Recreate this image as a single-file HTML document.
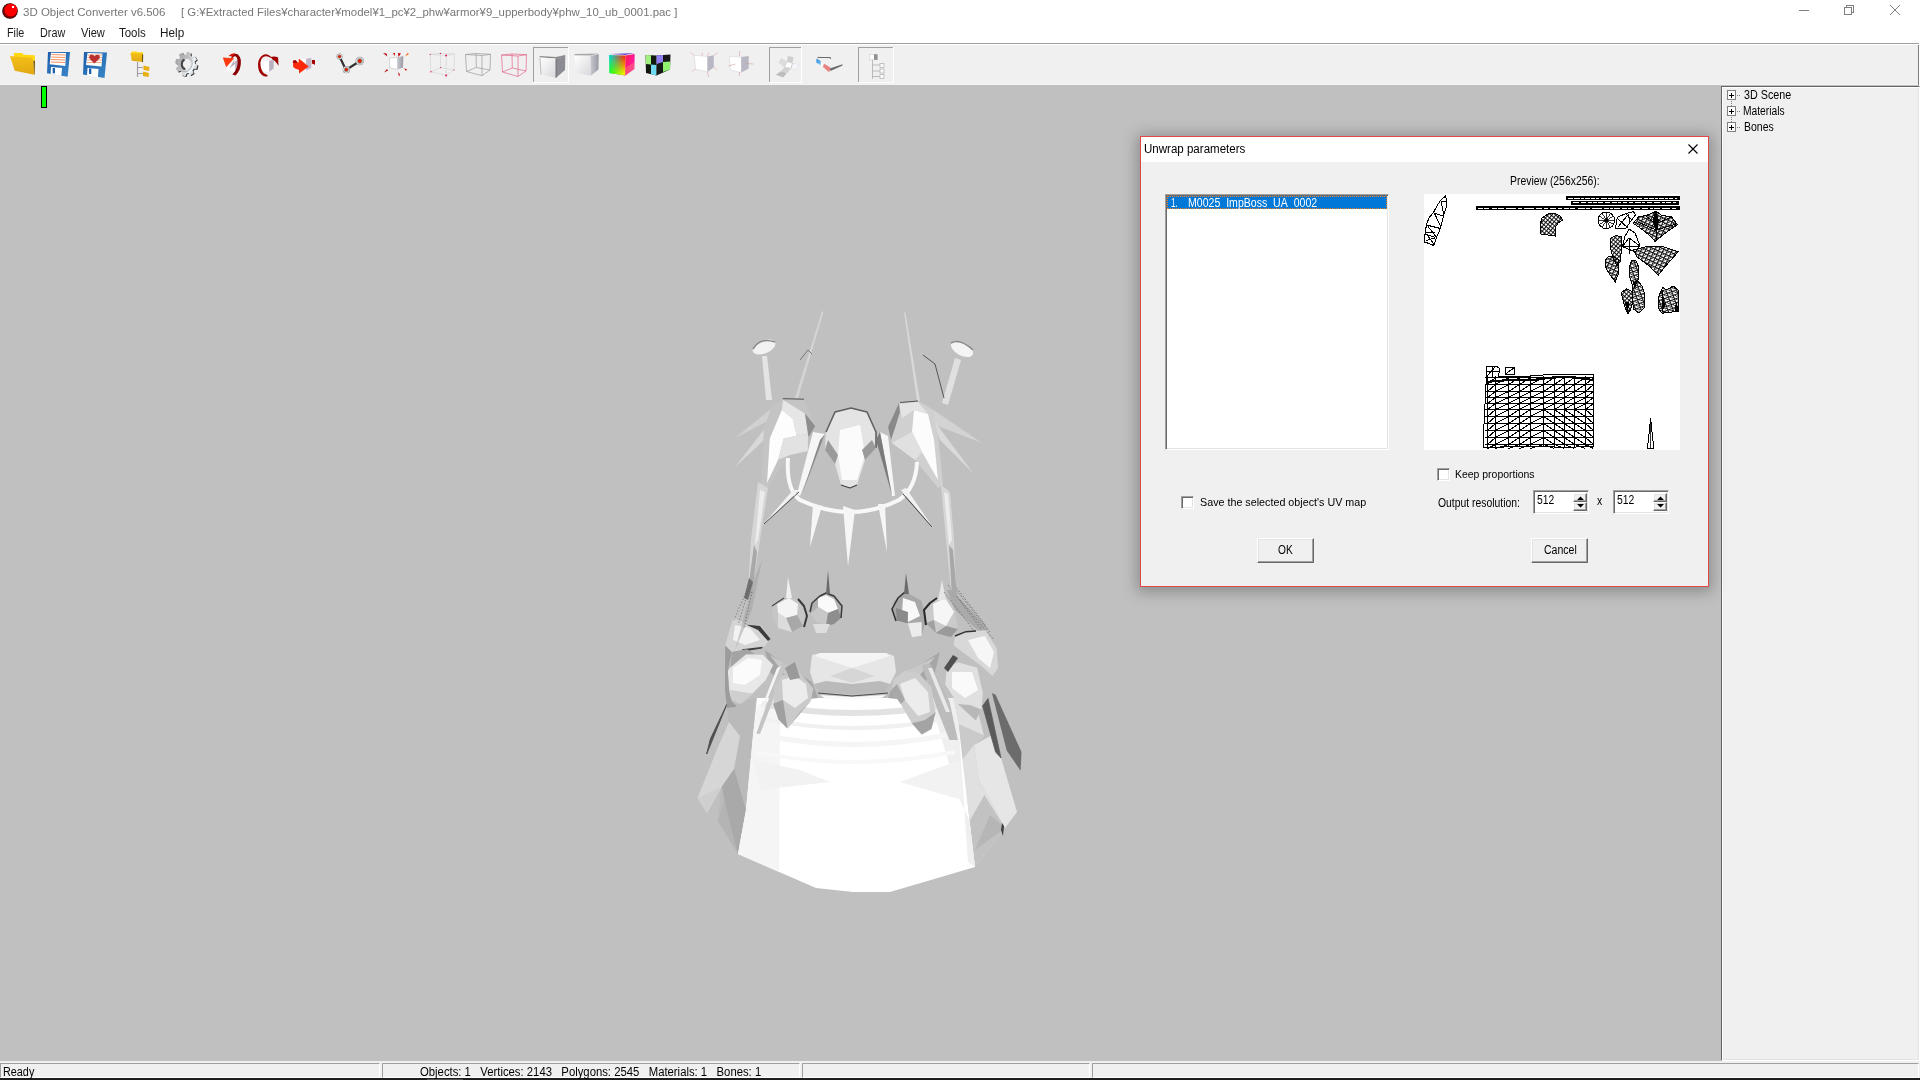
<!DOCTYPE html>
<html><head><meta charset="utf-8">
<style>
*{margin:0;padding:0;box-sizing:border-box}
html,body{width:1920px;height:1080px;overflow:hidden;background:#c0c0c0;font-family:"Liberation Sans",sans-serif;position:relative}
.abs{position:absolute}
#title{left:0;top:0;width:1920px;height:23px;background:#fff}
#menu{left:0;top:23px;width:1920px;height:20px;background:#fff}
#tbline{left:0;top:43px;width:1919px;height:1px;background:#a0a0a0}
#rw{left:1919px;top:43px;width:1px;height:1037px;background:#fff}
#tbline2{left:0;top:44px;width:1919px;height:1px;background:#fff}
#toolbar{left:0;top:45px;width:1919px;height:40px;background:#f0f0f0;border-right:1px solid #808080;box-shadow:inset 0 -1px 0 #f4f4f4}
.t{position:absolute;white-space:pre;line-height:1;transform-origin:0 0}
#panel{left:1721px;top:86px;width:199px;height:975px;background:#f0f0f0;border-left:1px solid #646464;border-top:1px solid #646464;border-right:1px solid #fff;border-bottom:1px solid #fff;box-shadow:inset 1px 1px 0 #fff, inset -1px -1px 0 #e3e3e3}
#status{left:0;top:1061px;width:1920px;height:19px;background:#f0f0f0}
.sp{position:absolute;top:2px;height:15px;border-top:1px solid #a0a0a0;border-left:1px solid #a0a0a0;border-bottom:1px solid #fff;border-right:1px solid #fff}
#dlg{left:1140px;top:136px;width:569px;height:451px;border:1px solid #e04848;background:#f0f0f0;box-shadow:0 2px 14px 3px rgba(0,0,0,0.28)}
#dlgcap{left:0;top:0;width:567px;height:25px;background:#fff}
.ms{font-size:11px;color:#000}
.chk{position:absolute;width:13px;height:13px;background:#fff;border-top:1px solid #a0a0a0;border-left:1px solid #a0a0a0;border-right:1px solid #fff;border-bottom:1px solid #fff;box-shadow:inset 1px 1px 0 #696969, inset -1px -1px 0 #e3e3e3}
.btn{position:absolute;background:#f0f0f0;border-top:1px solid #fff;border-left:1px solid #fff;border-right:1px solid #696969;border-bottom:1px solid #696969;box-shadow:inset -1px -1px 0 #a0a0a0, inset 1px 1px 0 #e3e3e3}
.edit{position:absolute;background:#fff;border-top:1px solid #a0a0a0;border-left:1px solid #a0a0a0;border-right:1px solid #fff;border-bottom:1px solid #fff;box-shadow:inset 1px 1px 0 #696969, inset -1px -1px 0 #e3e3e3}
</style></head><body>
<div id="title" class="abs">
 <svg class="abs" style="left:2px;top:3px" width="16" height="16"><circle cx="8" cy="8" r="7.8" fill="#1a0000"/><circle cx="8" cy="8" r="7.2" fill="#8a0000"/><circle cx="9" cy="7" r="6.3" fill="#ff0000"/><rect x="10" y="3" width="2" height="2" fill="#fff"/></svg>
</div>
<div id="menu" class="abs">
</div>
<div id="tbline" class="abs"></div><div id="rw" class="abs"></div><div id="tbline2" class="abs"></div>
<div id="toolbar" class="abs"></div>
<div class="abs" style="left:41px;top:86px;width:6px;height:22px;background:#00ff00;border:1px solid #000"></div>
<div id="panel" class="abs"></div>
<svg class="abs" style="left:1726px;top:90px" width="20" height="48">
<g fill="none" shape-rendering="crispEdges">
<rect x="1.5" y="0.5" width="8" height="9" stroke="#808080" fill="#fff"/>
<rect x="1.5" y="16.5" width="8" height="9" stroke="#808080" fill="#fff"/>
<rect x="1.5" y="32.5" width="8" height="9" stroke="#808080" fill="#fff"/>
<path d="M3 5.5H8M5.5 3V8 M3 21.5H8M5.5 19V24 M3 37.5H8M5.5 35V40" stroke="#000"/>
</g>
<g fill="#808080">
<rect x="11" y="5" width="1" height="1"/><rect x="13" y="5" width="1" height="1"/>
<rect x="11" y="21" width="1" height="1"/><rect x="13" y="21" width="1" height="1"/>
<rect x="11" y="37" width="1" height="1"/><rect x="13" y="37" width="1" height="1"/>
<rect x="5" y="11" width="1" height="1"/><rect x="5" y="13" width="1" height="1"/><rect x="5" y="15" width="1" height="1"/>
<rect x="5" y="27" width="1" height="1"/><rect x="5" y="29" width="1" height="1"/><rect x="5" y="31" width="1" height="1"/>
</g>
</svg>
<svg class="abs" style="left:1790px;top:0" width="130" height="24">
<g stroke="#808080" stroke-width="1" fill="none" shape-rendering="crispEdges">
<path d="M9 10.5H19"/>
<rect x="54.5" y="7.5" width="7" height="7"/>
<path d="M56.5 7.5V5.5H63.5V12.5H61.5"/>
</g>
<path d="M100 5L110 15M110 5L100 15" stroke="#808080" stroke-width="1" fill="none"/>
</svg>

<div id="status" class="abs">
 <div class="sp" style="left:0;width:380px"></div>
 <div class="sp" style="left:382px;width:418px"></div>
 <div class="sp" style="left:802px;width:288px"></div>
 <div class="sp" style="left:1092px;width:827px"></div>
</div>
<div class="abs" style="left:0;top:1078px;width:1920px;height:2px;background:#1e1e1e"></div>
<div class="abs" style="left:427px;top:1079px;width:36px;height:1px;background:#505050"></div>
<div id="dlg" class="abs">
 <div id="dlgcap" class="abs"></div>
</div>
<svg class="abs" style="left:0;top:45px" width="920" height="40" viewBox="0 45 920 40">
<defs>
<linearGradient id="gFold" x1="0" y1="0" x2="0" y2="1"><stop offset="0" stop-color="#f4c018"/><stop offset="1" stop-color="#e0a810"/></linearGradient>
<linearGradient id="gBlue" x1="0" y1="0" x2="1" y2="1"><stop offset="0" stop-color="#1c5ea8"/><stop offset="1" stop-color="#3a86c8"/></linearGradient>
<linearGradient id="gGear" x1="0" y1="0" x2="1" y2="1"><stop offset="0" stop-color="#808080"/><stop offset="0.5" stop-color="#e8e8e8"/><stop offset="1" stop-color="#909090"/></linearGradient>
<linearGradient id="gSide" x1="0" y1="0" x2="1" y2="0"><stop offset="0" stop-color="#c8c8d0"/><stop offset="1" stop-color="#9a9aa4"/></linearGradient>
<linearGradient id="gFace" x1="0" y1="0" x2="1" y2="1"><stop offset="0" stop-color="#ffffff"/><stop offset="1" stop-color="#d8d8dc"/></linearGradient>
<linearGradient id="gRGB1" x1="0" y1="0" x2="1" y2="1"><stop offset="0" stop-color="#10d8c0"/><stop offset="0.5" stop-color="#d86010"/><stop offset="0.75" stop-color="#40e010"/><stop offset="1" stop-color="#f0e000"/></linearGradient>
<linearGradient id="gRGB2" x1="0" y1="0" x2="1" y2="1"><stop offset="0" stop-color="#ff1040"/><stop offset="1" stop-color="#ff00e0"/></linearGradient>
<radialGradient id="gJoint"><stop offset="0.35" stop-color="#e02000"/><stop offset="0.5" stop-color="#909090"/><stop offset="0.8" stop-color="#e0e0e0"/><stop offset="1" stop-color="#808080"/></radialGradient>
</defs>
<!-- pressed buttons -->
<g shape-rendering="crispEdges">
<path d="M533.5 82V47.5H568" stroke="#a0a0a0" fill="none"/><path d="M568.5 47V82.5H533" stroke="#fff" fill="none"/>
<path d="M769.5 82V47.5H801" stroke="#a0a0a0" fill="none"/><path d="M801.5 47V82.5H769" stroke="#fff" fill="none"/>
<path d="M858.5 82V47.5H893" stroke="#a0a0a0" fill="none"/><path d="M893.5 47V82.5H858" stroke="#fff" fill="none"/>
</g>
<!-- folder -->
<path d="M14 53H22L23.5 54.7L34.7 55.3L35 61H14Z" fill="#ffd810"/>
<path d="M10 56L31.3 57.7L33.3 60.7L34.3 74.7L14.7 70.7Z" fill="url(#gFold)"/>
<path d="M33.3 60.7L35 60.7L34.7 74.7L34.3 74.7Z" fill="#7a5808"/>
<!-- floppy -->
<path d="M48 52L70 52L67.7 76.7L47 73.3Z" fill="url(#gBlue)"/>
<path d="M51 52.7L66 53L65.3 66L49.7 64.3Z" fill="#fff"/>
<path d="M51.5 54.5L65.5 55M51.3 57L65.3 57.5M51 59.5L65 60M50.8 62L65 62.5" stroke="#f49060" stroke-width="1"/>
<path d="M51 67L62 68L61.3 76L50.7 74Z" fill="#fff"/>
<rect x="52.7" y="68" width="2.3" height="5.3" fill="#1c5ea8"/>
<!-- floppy heart -->
<path d="M84 52L107 52.5L104.5 78L83 74.5Z" fill="url(#gBlue)"/>
<path d="M87.5 53L102.5 53.5L101.5 66.5L86 65Z" fill="#fff"/>
<path d="M88 55H102M87.5 57.5H102M87.3 60H101.8M87 62.5H101.5" stroke="#f4a070" stroke-width="0.9"/>
<path d="M94.3 63.5L89.5 58.5Q88.5 55 91.5 54.5Q93.5 54.5 94.5 56.3Q95.5 54.5 98 54.8Q100.5 55.5 99.5 58.5Z" fill="#b83030"/>
<path d="M87.5 68L98.5 69L98 77.5L87 75.5Z" fill="#fff"/>
<rect x="89" y="68.5" width="2.3" height="5.5" fill="#1c5ea8"/>
<!-- tree folders -->
<path d="M131.5 51.5H136.5L137.3 52.3H143V55H131.5Z" fill="#ffd810"/>
<path d="M130.5 53L143 53.5L143 62L131.8 60.8Z" fill="url(#gFold)"/>
<path d="M142 54.5L143.2 54.5L143 62.3L142 62Z" fill="#6a5008"/>
<path d="M137.5 62V77" stroke="#a0a0a0" stroke-width="1.2"/>
<path d="M137.5 67.5H143M137.5 73.5H143" stroke="#a0a0a0" stroke-width="1"/>
<path d="M143.5 65.5L149.5 67L149 71L143.5 70Z" fill="#e8b010"/>
<path d="M143 71.5L149 73L148.5 77L143 76Z" fill="#e8b010"/>
<!-- gear -->
<defs><linearGradient id="gG2" x1="0" y1="0.2" x2="1" y2="0.8"><stop offset="0" stop-color="#9a9a9a"/><stop offset="0.45" stop-color="#c8c8cc"/><stop offset="0.75" stop-color="#f4fafc"/><stop offset="1" stop-color="#b0b0b0"/></linearGradient></defs>
<path d="M195.95 64.61 L198.50 65.65 L197.50 69.89 L194.80 69.47 L193.54 71.31 L194.66 74.01 L191.21 76.24 L189.57 73.87 L187.47 74.20 L186.51 76.97 L182.62 75.89 L183.00 72.96 L181.31 71.58 L178.83 72.80 L176.78 69.05 L178.95 67.27 L178.65 64.99 L176.10 63.95 L177.10 59.71 L179.80 60.13 L181.06 58.29 L179.94 55.59 L183.39 53.36 L185.03 55.73 L187.13 55.40 L188.09 52.63 L191.98 53.71 L191.60 56.64 L193.29 58.02 L195.77 56.80 L197.82 60.55 L195.65 62.33Z" fill="#3a3a3a"/>
<path d="M194.95 63.81 L197.50 64.85 L196.50 69.09 L193.80 68.67 L192.54 70.51 L193.66 73.21 L190.21 75.44 L188.57 73.07 L186.47 73.40 L185.51 76.17 L181.62 75.09 L182.00 72.16 L180.31 70.78 L177.83 72.00 L175.78 68.25 L177.95 66.47 L177.65 64.19 L175.10 63.15 L176.10 58.91 L178.80 59.33 L180.06 57.49 L178.94 54.79 L182.39 52.56 L184.03 54.93 L186.13 54.60 L187.09 51.83 L190.98 52.91 L190.60 55.84 L192.29 57.22 L194.77 56.00 L196.82 59.75 L194.65 61.53Z" fill="url(#gG2)"/>
<ellipse cx="185.8" cy="64.2" rx="6.2" ry="7.6" transform="rotate(22 185.8 64.2)" fill="none" stroke="#b4b4b8" stroke-width="1"/>
<ellipse cx="186" cy="64.3" rx="3.9" ry="5.4" transform="rotate(22 186 64.3)" fill="#f0f0f0"/>
<path d="M184.5 59.5Q181.5 61 181.8 65Q182.3 68.5 185.3 69.2" fill="none" stroke="#454545" stroke-width="2"/>
<!-- rotate 1 -->
<path d="M226.2 61.7L235.2 61L235.2 72L226.6 70.3Z" fill="#fff"/>
<path d="M235.2 61L239.8 59.8L239.8 70.3L235.2 72Z" fill="#b8b0c0"/>
<path d="M229.3 68.6L234 60.5L235 64Z" fill="#b8aeb8"/>
<path d="M231 57.5Q234 51.8 238 54.5Q241.5 58 240.8 64Q240.2 71 235.5 75.5L232.4 74.6Q236.8 70 237.6 64Q238 58.5 236 56.5Q234 55.5 232.5 58Z" fill="#8c0000"/>
<path d="M228.5 56Q231.5 52.8 235 53.2L233.5 56.5Z" fill="#d01000"/>
<path d="M222.8 57.6L234.2 58.3L226.2 67.2Z" fill="#ff3a10"/>
<!-- rotate 2 -->
<path d="M259.9 60.7L269.2 60.7L269.2 71.7L261 71.4Z" fill="#fff"/>
<path d="M269.2 60.7L273.7 59.7L273.7 68.6L269.2 71.7Z" fill="#b8b0c0"/>
<path d="M272.3 58.3Q268 53 264 54.5Q258.5 57 258 64Q258 72 262 75Q265 77.5 268 76L266.5 74.5Q262.5 73.5 261 68Q259.5 62 262 58Q265 55 270 57.5Z" fill="#a00000"/>
<path d="M270.5 57Q275 56 278.1 57.6L278.5 66Q276 61 272.5 59.5Z" fill="#a00000"/>
<!-- arrow -->
<path d="M297.9 58L306.1 58.8L306.1 70.5L299 69Z" fill="#fff"/>
<path d="M306.1 58.8L311.3 58L311.3 68.1L306.1 70.5Z" fill="#c0b8c8"/>
<path d="M311.9 59.9L315 60.1L315 64.8L311.9 63.5Z" fill="#a00000"/>
<path d="M292.9 60.9Q294.5 60 295.8 60.4L298.4 63L298.9 58.6L308.7 66.6L299.1 73.6L298.9 69.7Q295 69 293.2 66.9Z" fill="#ff2a0a"/>
<path d="M292.9 60.9Q294.5 60 295.8 60.4L297.5 62.5L293.5 63Z" fill="#900000"/>
<!-- bones -->
<path d="M339.5 56.5L346 70L360 61" fill="none" stroke="#303030" stroke-width="2.2"/>
<circle cx="339.5" cy="56.5" r="3" fill="url(#gJoint)"/>
<circle cx="346.3" cy="69.7" r="3.6" fill="url(#gJoint)"/>
<circle cx="359.8" cy="61" r="4.2" fill="url(#gJoint)"/>
<!-- explode -->
<path d="M389.5 58L397.5 57.5L397.5 69.5L389.5 68Z" fill="#fff" stroke="#c0c0c0" stroke-width="0.6"/>
<path d="M397.5 57.5L403.3 56L403 67.5L397.5 69.5Z" fill="url(#gSide)"/>
<g fill="#c00000">
<path d="M383 53L386.5 53.5L387.3 56.5Z"/><path d="M393 53L395 53L394.5 56Z"/><path d="M398 53L401 53.5L398.5 57Z"/>
<path d="M407.5 53L409 54L405 56.5Z" fill="#ff6010"/><path d="M384 72.5L387 69L388 70.5Z"/><path d="M398 72L400 74.5L399 76.5Z"/><path d="M404 68L407.5 70L405.5 70.5Z"/>
</g>
<!-- wire cube vertices -->
<g fill="none" stroke="#d8d8d8" stroke-width="0.8">
<path d="M430.2 54.4L440.4 53.4L454.6 54.1L446.1 55.4Z M430.2 54.4L430.9 71.7L446.1 75.4L453.9 70L454.6 54.1 M446.1 55.4L446.1 75.4 M440.4 53.4L440.7 67.6L430.9 71.7 M440.7 67.6L453.9 70"/>
</g>
<g fill="#e0206a"><circle cx="446.1" cy="55.4" r="1"/><circle cx="446.1" cy="75.4" r="1"/><circle cx="440.4" cy="53.4" r="0.7"/><circle cx="440.7" cy="67.6" r="0.7"/><circle cx="430.9" cy="71.7" r="0.7"/><circle cx="430.2" cy="54.4" r="0.6"/><circle cx="453.9" cy="70" r="0.6"/></g>
<!-- wire cube -->
<path d="M465.5 54.5L476 53.5L490.5 54.3L482 55.5Z M465.5 54.5L466.5 71.5L482 75.7L490 70L490.5 54.3 M482 55.5L482 75.7 M476 53.5L476.3 67.5L466.5 71.5 M476.3 67.5L490 70" fill="none" stroke="#9a9a9a" stroke-width="0.7"/>
<!-- red wire cube -->
<path d="M501.5 55L512 54L526.5 54.7L518 56Z M501.5 55L502.5 72L518 76.5L526 71L526.5 54.7 M518 56L518 76.5 M512 54L512.3 68L502.5 72 M512.3 68L526 71" fill="none" stroke="#e05a80" stroke-width="0.65"/>
<!-- solid cube (pressed) -->
<path d="M539.5 56L556 57L565 55L565.5 56.5L556 58.5L540 57.5Z" fill="#8a8a8a"/>
<path d="M540 57.5L556 58.5L556 77.8L540.5 74.5Z" fill="url(#gFace)"/>
<path d="M540 57.5L541 74.5" stroke="#b0b0b0" stroke-width="0.8"/>
<path d="M556 58.5L565.3 56.3L565 70L556 77.8Z" fill="#8c8c94"/>
<path d="M556 58.5L556 77.8" stroke="#606060" stroke-width="0.8"/>
<!-- shaded cube -->
<path d="M574.5 54L598.5 53.5L590.5 55.5L574.5 55.5Z" fill="#a8a8a8"/>
<path d="M574.5 55.5L590.5 56L591 75.5L575 73Z" fill="url(#gFace)"/>
<path d="M590.5 56L598.7 54L598.5 69.5L591 75.5Z" fill="url(#gSide)"/>
<!-- color cube -->
<defs>
<linearGradient id="gH1" x1="0" y1="0" x2="1" y2="0"><stop offset="0" stop-color="#00e0d0"/><stop offset="1" stop-color="#ff2a00"/></linearGradient>
<linearGradient id="gH2" x1="0" y1="0" x2="1" y2="0"><stop offset="0" stop-color="#10ff10"/><stop offset="1" stop-color="#ffee00"/></linearGradient>
<linearGradient id="gV" x1="0" y1="0" x2="0" y2="1"><stop offset="0.1" stop-color="#fff" stop-opacity="0"/><stop offset="0.9" stop-color="#fff" stop-opacity="1"/></linearGradient>
<linearGradient id="gS1" x1="0" y1="0" x2="1" y2="1"><stop offset="0" stop-color="#ff2040"/><stop offset="1" stop-color="#ff10e0"/></linearGradient>
<mask id="mV" maskContentUnits="objectBoundingBox"><rect x="0" y="0" width="1" height="1" fill="url(#gV)"/></mask>
</defs>
<path d="M609.5 54L634.5 53L625.3 55Z" fill="#7050d0"/>
<path d="M609 55L625.3 55.5L625.3 75.5L609.5 73Z" fill="url(#gH1)"/>
<path d="M609 55L625.3 55.5L625.3 75.5L609.5 73Z" fill="url(#gH2)" mask="url(#mV)"/>
<path d="M625.3 55.5L634.7 54L634.3 69L625.3 75.5Z" fill="url(#gS1)"/>
<path d="M625.3 68L634.3 62L634.3 69L625.3 75.5Z" fill="#ff8060" opacity="0.5"/>
<!-- checker cube -->
<path d="M645.5 55L656.5 55.5L656.5 75.5L646 73Z" fill="#101810"/>
<path d="M645.5 55L651 55.2L651 64.5L645.8 64Z" fill="#a0f080"/>
<path d="M651 64.5L656.5 65L656.5 75.5L651 74.5Z" fill="#70d8f0"/>
<path d="M656.5 55.5L670.5 54.5L670 69.5L656.5 75.5Z" fill="#181818"/>
<path d="M656.5 55.5L663 55L663 62L656.5 64Z" fill="#9080f0"/>
<path d="M663 62L670.2 61.5L670 69.5L663 72Z" fill="#90f070"/>
<!-- normals cube -->
<path d="M694.3 55.3L707.5 56.5L707.5 71.9L695.5 69Z" fill="#fff" stroke="#d0d0d0" stroke-width="0.5"/>
<path d="M707.5 56.5L713.8 55.3L713.8 67.3L707.5 71.9Z" fill="#b8b8c4"/>
<path d="M694.3 55.3L690.5 52.5M707.5 56.5L708.5 52.5M713.8 55.3L718 52.5M713.8 67.3L717 70M707.5 71.9L708.5 77M695.5 69L692 71.5M702 55.5L702.5 52.5" stroke="#d8a0a0" stroke-width="0.55"/>
<!-- axis cube -->
<path d="M729.3 56.5L741.3 57L741.3 72.5L730.4 70.2Z" fill="#fff" stroke="#d0d0d0" stroke-width="0.5"/>
<path d="M741.3 57L748.7 55.9L748.7 68.5L741.3 72.5Z" fill="#b8b8c4"/>
<path d="M739.5 51V56M728.5 66L735.5 64M745.5 63.5L753.5 64M739.5 72V76" stroke="#d0a0a0" stroke-width="0.6"/>
<!-- unwrap -->
<path d="M787.9 55.9L793.75 57.2L792.5 62.6L787 61.3Z" fill="#cfcfd2"/>
<path d="M781.25 58L786.25 61.3L784.2 67.2L778.3 62.6Z" fill="#dcdcde"/>
<path d="M792.9 63.4L798.75 64.25L796.7 70L790.8 68.8Z" fill="#f6f6fa" stroke="#d8d8d8" stroke-width="0.4"/>
<path d="M784.6 67.2L790.4 68.8L787.5 73L780.8 71.3Z" fill="#d2d2d4"/>
<path d="M780.8 71.3L786.7 73L783.3 77.6L775.8 74.7Z" fill="#bdbdc0"/>
<path d="M786.7 61.75L792.5 63L790.8 68.4L784.6 67.2Z" fill="#fff" stroke="#b8b8b8" stroke-width="0.6"/>
<!-- glasses -->
<path d="M817.5 57.4L830.4 57.6L830.4 59" fill="none" stroke="#686868" stroke-width="1"/>
<defs><linearGradient id="gBl" x1="0" y1="0" x2="1" y2="1"><stop offset="0" stop-color="#1078d8"/><stop offset="1" stop-color="#b0dcf4"/></linearGradient></defs>
<path d="M816.7 58.4L821.25 61.3L820.8 65.5L816.25 62.6Z" fill="url(#gBl)"/>
<path d="M823.75 63.4L830.4 67.6L829.2 72.6L822.9 66.75Z" fill="#e88282"/>
<path d="M829.8 68.5L842.5 64.2L842.5 65.4L830.5 71Z" fill="#6a6a6a"/>
<path d="M821.25 61.3L823.75 63.4L822.9 66.75L820.8 65.5Z" fill="#fafafa"/>
<!-- hierarchy -->
<rect x="869.3" y="54.3" width="5" height="5.6" fill="#fcfcfc" stroke="#c8c8c8" stroke-width="0.5"/>
<rect x="874" y="54.2" width="3.6" height="5.7" fill="#909090"/>
<path d="M872.5 60V79M872.5 65H880M872.5 71H880M872.5 76.5H880" stroke="#b4b4b4" stroke-width="0.9"/>
<rect x="880" y="63.5" width="4" height="4" fill="#fafafa" stroke="#b0b0b0" stroke-width="0.7"/>
<rect x="880" y="69" width="4" height="4" fill="#fafafa" stroke="#b0b0b0" stroke-width="0.7"/>
<rect x="880" y="74.5" width="4" height="4" fill="#fafafa" stroke="#b0b0b0" stroke-width="0.7"/>
</svg>
<svg class="abs" style="left:0;top:0" width="1720" height="1060" viewBox="0 0 1720 1060">
<g stroke-linejoin="round">
<!-- left flap -->
<polygon points="727,708 755,698 753,736 746,810 738,854 718,821 721.5,784 734,769" fill="#bababa"/>
<polygon points="721.5,784 734,769 746,810 738,854 730,830" fill="#a9a9a9"/>
<polygon points="718,821 724,800 738,854" fill="#b4b4b4"/>
<polygon points="729,722 740,736 734,769 721.5,787 707,813 697.5,798 718,747" fill="#d6d6d6"/>
<polygon points="697.5,798 721.5,787 707,813" fill="#cfcfcf"/>
<polygon points="727,704 706.7,754 710.4,739" fill="#505050" stroke="#505050" stroke-width="1"/>
<!-- right flap -->
<polygon points="953,698 975,700 984,736 974,745 979,780 1005,828 975,867 969.6,821 958.5,724" fill="#e0e0e0"/>
<polygon points="974,745 994,734 1017,812 1005,828 979,780" fill="#e6e6e6"/>
<polygon points="969.6,821 984.4,795 1005,828 975,867" fill="#c2c2c2"/>
<polygon points="975,850 990,815 1005,828" fill="#b6b6b6"/>
<polygon points="958.5,724 984.4,735.5 974,745 962,760" fill="#cacaca"/>
<polygon points="982.6,706 988,698.5 1001,758 995.6,752" fill="#5a5a5a" stroke="#5a5a5a" stroke-width="0.8"/>
<polygon points="991.9,693 995.6,694.8 1021.5,752 1020.6,770.7 1006.7,750.4" fill="#6c6c6c"/>
<polygon points="1002,823 1004,826 1003,836 1001,830" fill="#404040"/>
<!-- skirt main -->
<polygon points="757,698 953,698 958.5,724 969.6,821 975,867 890,892 853,892 816,888 738,854 746,810 753,736" fill="#ffffff"/>
<polygon points="753,736 757,705 780,700 779,872 738,854 746,810" fill="#f5f5f5"/>
<polygon points="958.5,724 953,698 930,700 960,800 969.6,821 975,867 968,862" fill="#efefef"/>
<path d="M762,704 Q853,722 948,704" fill="none" stroke="#e2e2e2" stroke-width="6"/>
<path d="M760,718 Q853,738 950,718" fill="none" stroke="#f0f0f0" stroke-width="4"/>
<path d="M758,734 Q853,755 952,734" fill="none" stroke="#f5f5f5" stroke-width="5"/>
<path d="M756,752 Q853,772 955,752" fill="none" stroke="#f8f8f8" stroke-width="4"/>
<polygon points="753,760 800,770 830,782 760,790" fill="#f2f2f2"/>
<polygon points="900,782 960,760 962,800" fill="#f2f2f2"/>
<!-- ribbons under pendants -->
<polygon points="765,650 790,668 812,682 818,698 800,700 770,672" fill="#a6a6a6"/>
<polygon points="940,652 915,668 894,682 888,698 906,700 935,672" fill="#a6a6a6"/>
<polygon points="770,655 800,672 812,690 805,690 785,675" fill="#c8c8c8"/>
<polygon points="935,657 905,672 894,690 900,690 920,675" fill="#c8c8c8"/>
<!-- belt -->
<polygon points="812,655 820,653 886,653 894,656 896,672 890,684 880,688 852,690 826,688 814,684 810,672" fill="#e6e6e6"/>
<polygon points="815,656 852,668 890,656 886,653 820,653" fill="#f4f4f4"/>
<polygon points="830,676 852,668 875,676 852,683" fill="#d6d6d6"/>
<polygon points="814,684 826,681 852,684 880,681 890,684 885,692 852,694 820,692" fill="#bababa"/>
<polyline points="818,693 852,696 888,693" fill="none" stroke="#4a4a4a" stroke-width="1"/>
<polygon points="820,695 852,697 886,695 880,699 852,700 826,699" fill="#fafafa"/>
<!-- left clusters -->
<polygon points="733,618 747,624 761.5,626 770.6,639 764,646.7 747,649.3 731.7,652 725.2,645.4" fill="#d4d4d4"/>
<polygon points="735,625 750,628 760,640 745,645 733,640" fill="#f2f2f2"/>
<polygon points="746,624.6 760,626 770.6,639 768,641 758,630" fill="#3c3c3c"/>
<polygon points="742,649.3 762.8,646.7 762,648.5 743,651.5" fill="#404040"/>
<polygon points="731.7,652 747,649.3 773.2,664.9 762.8,654.5 746,654.5 730.4,667.4" fill="#a4a4a4"/>
<polygon points="730.4,667.4 746,654.5 762.8,654.5 773.2,664.9 765.4,680.4 752.4,693.4 740.8,703.8 730.4,698.6 727.8,671.3" fill="#e8e8e8"/>
<polygon points="733,668 748,658 762,660 760,675 745,685 733,683" fill="#fbfbfb"/>
<polygon points="730.4,690 752.4,693.4 740.8,703.8 730.4,698.6" fill="#cfcfcf"/>
<polygon points="725.2,645.4 731.7,652 727.8,671.3 729,690.8 731.7,701.2 736.9,706.4 727,708 725,690" fill="#9c9c9c"/>
<polygon points="782.3,661 787,664 760,734 756.3,733.6" fill="#c4c4c4"/>
<polygon points="777,668 781,666 757,725 755,724" fill="#f4f4f4"/>
<polygon points="774.5,685.6 782.3,675.2 792.6,672.6 804.3,677.8 813.4,688.2 810.8,701.2 797.8,714.1 787.4,728.4 778.4,719.3 773.2,703.8" fill="#cacaca"/>
<polygon points="782,680 795,676 806,684 808,698 795,708 783,700" fill="#ececec"/>
<polygon points="773.2,703.8 783,700 787.4,728.4 778.4,719.3" fill="#a0a0a0"/>
<polygon points="797.8,714.1 810.8,701.2 787.4,728.4" fill="#b0b0b0"/>
<polygon points="785,668 795,662 800,678 790,680" fill="#9a9a9a"/>
<!-- orbs left -->
<polygon points="774,603 786,597 798,600 805,612 803,626 792,632 778,628 772,616" fill="#c6c6c6"/>
<polygon points="777,604 789,598 798,604 797,615 786,618 778,613" fill="#f4f4f4"/>
<polygon points="786,618 797,615 803,626 792,632" fill="#a8a8a8"/>
<polygon points="778,613 786,618 792,632 778,628" fill="#dcdcdc"/>
<path d="M798,599 L804,606 L807,616 L804,627" fill="none" stroke="#3a3a3a" stroke-width="2"/>
<path d="M772,606 L784,598" fill="none" stroke="#4a4a4a" stroke-width="1.3"/>
<polygon points="786,598 788,577 792,598" fill="#f0f0f0"/>
<polygon points="811,604 818,596 826,593 834,596 842,606 841,618 834,624 826,626 816,622 810,614" fill="#b0b0b0"/>
<polygon points="818,598 826,595 834,599 838,609 828,613 818,607" fill="#fafafa"/>
<polygon points="810,614 818,607 828,613 826,626 816,622" fill="#c8c8c8"/>
<polygon points="828,613 838,609 841,618 834,624 826,626" fill="#8e8e8e"/>
<polygon points="813,624 830,624 826,633 816,633" fill="#dedede"/>
<path d="M810,612 L812,603 L820,596 L826,593 L834,596 L842,606 L841,618" fill="none" stroke="#3c3c3c" stroke-width="1.5"/>
<polygon points="826,594 828,570 830,594" fill="#6a6a6a"/>
<!-- right clusters -->
<polygon points="893.9,601 905,591.4 921.7,601 925.8,620.6 921.7,635.8 912,637.2 907.8,623.3 896.7,620.6 892.5,609.4" fill="#a8a8a8"/>
<polygon points="903,598 915,602 920,616 908,622 902,612" fill="#f8f8f8"/>
<polygon points="896.7,620.6 907.8,623.3 908,612 896,608" fill="#8a8a8a"/>
<polygon points="907.8,623.3 921.7,622 921.7,635.8 912,637.2" fill="#ececec"/>
<path d="M896,621 L892,609 L898,598 L905,592" fill="none" stroke="#2e2e2e" stroke-width="1.5"/>
<polygon points="904,594 906,573 909,594" fill="#6a6a6a"/>
<polygon points="924.4,609.4 935.6,599.7 945.3,595.6 955,609.4 957.8,628.9 950.8,637.2 935.6,633 925.8,623.3" fill="#cacaca"/>
<polygon points="933,604 945,598 954,612 946,626 934,620" fill="#f6f6f6"/>
<polygon points="935.6,633 950.8,637.2 957.8,628.9 946,626" fill="#9a9a9a"/>
<polygon points="925.8,623.3 934,620 936,633" fill="#a0a0a0"/>
<path d="M926,625 L924,610 L930,603 L937,598" fill="none" stroke="#2a2a2a" stroke-width="2"/>
<polygon points="938,600 942,580 946,600" fill="#e6e6e6"/>
<polygon points="946.7,590 952,590 988.3,628.9 980,632 955,610" fill="#a4a4a4" opacity="0.8"/>
<path d="M948,585 L982,630 M952,582 L986,626 M956,590 L990,632 M944,592 L975,632 M960,600 L994,640" fill="none" stroke="#686868" stroke-width="0.7" stroke-dasharray="2 1.5"/>
<polygon points="955,635.8 966.1,631.7 985.6,630.3 996.7,648.3 998,667.8 992.5,676.1 980,665 968.9,656.7 953.6,645.6" fill="#d8d8d8"/>
<polygon points="968,640 985,636 994,652 990,668 978,658" fill="#f6f6f6"/>
<path d="M955,636 L966,631.7 L976,631" fill="none" stroke="#333" stroke-width="1.4"/>
<polygon points="946.7,667.8 957.8,662.2 977.2,667.8 982.8,692.8 981.4,709.4 975.8,720.6 957.8,703.9 945.3,684.4" fill="#e0e0e0"/>
<polygon points="952,672 972,672 978,690 965,698 952,688" fill="#fafafa"/>
<polygon points="957.8,703.9 975.8,720.6 981.4,709.4 970,705" fill="#b8b8b8"/>
<polygon points="953,655 958,658 948,672 944,668" fill="#505050"/>
<polygon points="921.7,665 930,663.6 949.4,701.1 957.8,740 949.4,740 938.3,712.2" fill="#bcbcbc"/>
<polygon points="928,668 932,668 950,712 946,712" fill="#e8e8e8"/>
<polygon points="893.9,678.9 905,670.6 918.9,673.3 931.4,687.2 935.6,712.2 931.4,728.9 921.7,734.4 911.9,723.3 900.8,703.9 891.1,690" fill="#cdcdcd"/>
<polygon points="900,684 915,678 928,692 930,712 918,716 905,700" fill="#ececec"/>
<polygon points="911.9,723.3 921.7,734.4 931.4,728.9 935.6,712.2 925,720" fill="#a4a4a4"/>
<polygon points="891.1,690 900.8,703.9 905,700 897,684" fill="#a8a8a8"/>
<polygon points="754,580 762,560 752,610 735,650" fill="#a0a0a0" opacity="0.5"/>
<!-- upper: pins and antennae -->
<polygon points="762,356 767,356 772,400 766,400" fill="#e4e4e4"/>
<ellipse cx="764" cy="347" rx="12" ry="6.5" transform="rotate(-22 764 347)" fill="#f2f2f2"/>
<path d="M753,349 Q760,337 775,342" fill="none" stroke="#888" stroke-width="1.5"/>
<polygon points="955,358 961,360 948,405 942,403" fill="#e0e0e0"/>
<ellipse cx="962" cy="349" rx="12" ry="6.5" transform="rotate(28 962 349)" fill="#f4f4f4"/>
<path d="M951,343 Q960,338 973,350" fill="none" stroke="#888" stroke-width="1.5"/>
<polygon points="822,311 823.5,312 798,398 795,398" fill="#d4d4d4"/>
<polyline points="800,360 808,350 812,354" fill="none" stroke="#777" stroke-width="1"/>
<polygon points="904,312 905.5,313 920,401 917,401" fill="#d8d8d8"/>
<polyline points="923,355 935,364 944,398" fill="none" stroke="#555" stroke-width="1"/>
<!-- fins -->
<polygon points="783,399 735,438 770,420" fill="#d4d4d4" opacity="0.85"/>
<polygon points="783,405 735,467 775,430" fill="#dcdcdc" opacity="0.85"/>
<polygon points="932,409 982,443 935,425" fill="#d6d6d6" opacity="0.85"/>
<polygon points="932,418 973,473 940,440" fill="#dedede" opacity="0.85"/>
<!-- horns -->
<polygon points="783,399 804,399 815,426 808.7,437 807.8,451 790,455 767,488 761,486 762.4,450 764.3,427 771.7,407" fill="#c4c4c4"/>
<polygon points="781.9,409.8 793,419 796.7,435.7 783.7,438.5 778.1,459.8 767,483 769.8,438.5" fill="#fdfdfd"/>
<polygon points="783,400 805,413.5 808,434 796.7,435.7 793,419 781.9,409.8" fill="#e6e6e6"/>
<polygon points="783.7,438.5 796.7,435.7 808,434 807.8,451 790,455 778.1,459.8" fill="#e2e2e2"/>
<polygon points="805,413.5 815.2,426 808.7,437 808,434" fill="#8e8e8e"/>
<polyline points="782.8,398.7 804,399.2" fill="none" stroke="#505050" stroke-width="1"/>
<polygon points="899,403 918,401 932,409 938,434 943,485 938,488 915,460 892,443 888,427" fill="#d0d0d0"/>
<polygon points="914,410 928,414 934,440 938,480 922,452 912,432" fill="#fcfcfc"/>
<polygon points="899,404 918,402 928,414 914,410 902,418" fill="#e4e4e4"/>
<polygon points="892,443 912,432 922,452 915,460" fill="#e0e0e0"/>
<polygon points="899,403 888,427 891,440 895,428 900,412" fill="#8a8a8a"/>
<polyline points="900,402.5 918,401" fill="none" stroke="#505050" stroke-width="1"/>
<!-- skull -->
<polygon points="835,412 851,408 867,412 876,430 876,448 865,460 857,485 850,488 841,485 835,464 825,450 826,430" fill="#e4e4e4"/>
<polygon points="840,430 860,425 865,455 857,480 842,480 838,455" fill="#fbfbfb"/>
<polyline points="826,432 835,412 851,408 867,412 876,432 876,448" fill="none" stroke="#606060" stroke-width="1.6"/>
<polyline points="841,485 850,488 857,485" fill="none" stroke="#404040" stroke-width="1.2"/>
<polygon points="825,450 835,464 838,455 828,440" fill="#9a9a9a"/>
<polygon points="876,448 865,460 862,450 872,440" fill="#9a9a9a"/>
<!-- small horns -->
<polygon points="813,432 825,434 800,496 797,494" fill="#f6f6f6"/>
<polygon points="820,440 825,434 802,494" fill="#8a8a8a"/>
<polygon points="880,432 888,436 895,496 892,496" fill="#f6f6f6"/>
<polygon points="876,440 880,432 892,495" fill="#7a7a7a"/>
<!-- necklace -->
<path d="M788,458 Q786,490 800,500 Q851,524 899,500 Q916,488 917,462" fill="none" stroke="#f8f8f8" stroke-width="4"/>
<!-- teeth -->
<polygon points="799,490 762,526 793,490" fill="#f2f2f2"/>
<polyline points="799,492 764,524" fill="none" stroke="#505050" stroke-width="1"/>
<polygon points="843,506 848,566 855,510" fill="#f6f6f6"/>
<polygon points="813,504 810,547 822,506" fill="#f6f6f6"/>
<polygon points="878,504 887,552 885,504" fill="#f6f6f6"/>
<polygon points="901,490 934,529 906,488" fill="#f2f2f2"/>
<polyline points="903,494 932,527" fill="none" stroke="#404040" stroke-width="1"/>
<!-- fringe -->
<polygon points="758,482 768,488 763,520 757,560 752,590 748,590 751,540" fill="#d6d6d6"/>
<polygon points="760,490 765,492 758,540 755,545" fill="#ececec"/>
<polygon points="754,545 757,552 752,596 747,598" fill="#a8a8a8"/>
<polygon points="749,578 753,582 748,600 744,598" fill="#707070"/>
<path d="M750,585 L738,625 M747,590 L733,622 M752,592 L744,628" fill="none" stroke="#505050" stroke-width="0.8" stroke-dasharray="1 2.2"/>
<polygon points="941,485 950,492 954,540 956,590 951,590 946,540" fill="#d6d6d6"/>
<polygon points="944,492 948,494 952,540 949,545" fill="#ececec"/>
<polygon points="949,545 953,550 957,596 952,598" fill="#a8a8a8"/>
</g>
</svg>

<svg class="abs" style="left:1688px;top:144px" width="10" height="10" viewBox="0 0 10 10"><path d="M0.5 0.5L9.5 9.5M9.5 0.5L0.5 9.5" stroke="#000" stroke-width="1.1"/></svg>
<div class="edit" style="left:1165px;top:194px;width:224px;height:256px"></div>
<div class="abs" style="left:1167px;top:196px;width:220px;height:13px;background:#0078d7;outline:1px dotted #f08020;outline-offset:-1px"></div>
<div class="abs" style="left:1424px;top:194px;width:256px;height:256px;background:#fff" id="uv"></div>
<div class="chk" style="left:1437px;top:468px"></div>
<div class="chk" style="left:1181px;top:496px"></div>
<div class="edit" style="left:1533px;top:490px;width:56px;height:24px"></div>
<div class="btn" style="left:1573px;top:493px;width:14px;height:9px"></div>
<div class="btn" style="left:1573px;top:502px;width:14px;height:9px"></div>
<svg class="abs" style="left:1573px;top:493px" width="14" height="18"><path d="M4 7H11L7.5 3.5Z M4 11H11L7.5 14.5Z" fill="#000"/></svg>
<div class="edit" style="left:1613px;top:490px;width:56px;height:24px"></div>
<div class="btn" style="left:1653px;top:493px;width:14px;height:9px"></div>
<div class="btn" style="left:1653px;top:502px;width:14px;height:9px"></div>
<svg class="abs" style="left:1653px;top:493px" width="14" height="18"><path d="M4 7H11L7.5 3.5Z M4 11H11L7.5 14.5Z" fill="#000"/></svg>
<div class="btn" style="left:1257px;top:538px;width:57px;height:25px"></div>
<div class="btn" style="left:1531px;top:538px;width:57px;height:25px"></div>
<svg class="abs" style="left:1424px;top:194px" width="256" height="256" viewBox="0 0 256 256" shape-rendering="crispEdges">
<defs>
<pattern id="pA" width="4" height="4" patternUnits="userSpaceOnUse" patternTransform="rotate(25)"><path d="M0 0.5H4M0.5 0V4M0 4L4 0" stroke="#000" stroke-width="0.9" fill="none"/></pattern>
<pattern id="pB" width="6" height="6" patternUnits="userSpaceOnUse" patternTransform="rotate(-20)"><path d="M0 0.5H6M0.5 0V6M0 6L6 0" stroke="#000" stroke-width="0.9" fill="none"/></pattern>
<pattern id="pC" width="3" height="3" patternUnits="userSpaceOnUse" patternTransform="rotate(40)"><path d="M0 0.5H3M0.5 0V3" stroke="#000" stroke-width="0.9" fill="none"/></pattern>
<pattern id="pD" width="4" height="5" patternUnits="userSpaceOnUse" patternTransform="rotate(70)"><path d="M0 0.5H4M0.5 0V5M0 5L4 0" stroke="#000" stroke-width="0.9" fill="none"/></pattern>
</defs>
<polygon points="21.5,2 22.5,6 22.7,11.7 20,20 17.5,30 15.5,37 12.7,43 10.3,50 9.3,51.3 5,49.5 0.5,48 0.3,44 1.3,38 2.5,30.5 5,24 10,17.5 13.5,11 16.5,6.5" fill="none" stroke="#000" stroke-width="1"/>
<path d="M16.5 7L22.5 8M17.3 7.7L19.5 20M10 19L19.5 22M10.3 19L17 33M2.5 31L16.5 34.5M4 32.5L12.3 43M2.3 38.5L11 38M1.5 40L11.5 43.5M2 46.5L11 44M3 41L10 50" stroke="#000" fill="none"/>
<rect x="142" y="2" width="113.5" height="4" fill="#000"/>
<rect x="144" y="4" width="5" height="1" fill="#fff"/>
<rect x="150" y="4" width="6" height="1" fill="#fff"/>
<rect x="157" y="4" width="3" height="1" fill="#fff"/>
<rect x="161" y="4" width="5" height="1" fill="#fff"/>
<rect x="167" y="4" width="4" height="1" fill="#fff"/>
<rect x="172" y="4" width="3" height="1" fill="#fff"/>
<rect x="177" y="4" width="6" height="1" fill="#fff"/>
<rect x="184" y="4" width="4" height="1" fill="#fff"/>
<rect x="189" y="4" width="6" height="1" fill="#fff"/>
<rect x="196" y="4" width="3" height="1" fill="#fff"/>
<rect x="200" y="4" width="3" height="1" fill="#fff"/>
<rect x="205" y="4" width="3" height="1" fill="#fff"/>
<rect x="209" y="4" width="3" height="1" fill="#fff"/>
<rect x="213" y="4" width="5" height="1" fill="#fff"/>
<rect x="220" y="4" width="4" height="1" fill="#fff"/>
<rect x="225" y="4" width="5" height="1" fill="#fff"/>
<rect x="231" y="4" width="3" height="1" fill="#fff"/>
<rect x="235" y="4" width="5" height="1" fill="#fff"/>
<rect x="241" y="4" width="3" height="1" fill="#fff"/>
<rect x="245" y="4" width="4" height="1" fill="#fff"/>
<rect x="251" y="4" width="2" height="1" fill="#fff"/>
<rect x="147" y="6.5" width="107.5" height="4" fill="#000"/>
<rect x="149" y="8" width="6" height="1" fill="#fff"/>
<rect x="157" y="8" width="5" height="1" fill="#fff"/>
<rect x="164" y="8" width="4" height="1" fill="#fff"/>
<rect x="169" y="8" width="4" height="1" fill="#fff"/>
<rect x="174" y="8" width="5" height="1" fill="#fff"/>
<rect x="181" y="8" width="5" height="1" fill="#fff"/>
<rect x="188" y="8" width="5" height="1" fill="#fff"/>
<rect x="194" y="8" width="3" height="1" fill="#fff"/>
<rect x="199" y="8" width="4" height="1" fill="#fff"/>
<rect x="205" y="8" width="4" height="1" fill="#fff"/>
<rect x="211" y="8" width="6" height="1" fill="#fff"/>
<rect x="218" y="8" width="3" height="1" fill="#fff"/>
<rect x="223" y="8" width="5" height="1" fill="#fff"/>
<rect x="230" y="8" width="6" height="1" fill="#fff"/>
<rect x="238" y="8" width="3" height="1" fill="#fff"/>
<rect x="242" y="8" width="5" height="1" fill="#fff"/>
<rect x="249" y="8" width="3" height="1" fill="#fff"/>
<rect x="51.5" y="12" width="204.0" height="4" fill="#000"/>
<rect x="54" y="14" width="5" height="1" fill="#fff"/>
<rect x="60" y="14" width="5" height="1" fill="#fff"/>
<rect x="68" y="14" width="5" height="1" fill="#fff"/>
<rect x="74" y="14" width="6" height="1" fill="#fff"/>
<rect x="82" y="14" width="4" height="1" fill="#fff"/>
<rect x="86" y="14" width="6" height="1" fill="#fff"/>
<rect x="94" y="14" width="4" height="1" fill="#fff"/>
<rect x="100" y="14" width="4" height="1" fill="#fff"/>
<rect x="104" y="14" width="6" height="1" fill="#fff"/>
<rect x="112" y="14" width="6" height="1" fill="#fff"/>
<rect x="120" y="14" width="4" height="1" fill="#fff"/>
<rect x="126" y="14" width="6" height="1" fill="#fff"/>
<rect x="134" y="14" width="4" height="1" fill="#fff"/>
<rect x="140" y="14" width="5" height="1" fill="#fff"/>
<rect x="146" y="14" width="5" height="1" fill="#fff"/>
<rect x="154" y="14" width="4" height="1" fill="#fff"/>
<rect x="158" y="14" width="3" height="1" fill="#fff"/>
<rect x="162" y="14" width="4" height="1" fill="#fff"/>
<rect x="168" y="14" width="4" height="1" fill="#fff"/>
<rect x="172" y="14" width="6" height="1" fill="#fff"/>
<rect x="180" y="14" width="5" height="1" fill="#fff"/>
<rect x="186" y="14" width="3" height="1" fill="#fff"/>
<rect x="190" y="14" width="6" height="1" fill="#fff"/>
<rect x="198" y="14" width="5" height="1" fill="#fff"/>
<rect x="204" y="14" width="3" height="1" fill="#fff"/>
<rect x="210" y="14" width="6" height="1" fill="#fff"/>
<rect x="218" y="14" width="6" height="1" fill="#fff"/>
<rect x="226" y="14" width="3" height="1" fill="#fff"/>
<rect x="230" y="14" width="6" height="1" fill="#fff"/>
<rect x="238" y="14" width="4" height="1" fill="#fff"/>
<rect x="242" y="14" width="4" height="1" fill="#fff"/>
<rect x="248" y="14" width="4" height="1" fill="#fff"/>
<polygon points="117,40 116,31 118,24 124,20 130,19 136,22 138.5,26 134,29 131,34 131,42 124,41" fill="url(#pC)" stroke="#000" stroke-width="1"/>
<circle cx="182.3" cy="26.3" r="8.3" fill="none" stroke="#000"/>
<path d="M182.3 26.3L190.3 26.3M182.3 26.3L189.2 30.3M182.3 26.3L186.3 33.2M182.3 26.3L182.3 34.3M182.3 26.3L178.3 33.2M182.3 26.3L175.4 30.3M182.3 26.3L174.3 26.3M182.3 26.3L175.4 22.3M182.3 26.3L178.3 19.4M182.3 26.3L182.3 18.3M182.3 26.3L186.3 19.4M182.3 26.3L189.2 22.3" stroke="#000" fill="none" stroke-width="0.8"/>
<circle cx="182.3" cy="26.3" r="2" fill="#000"/>
<polygon points="191.3,34.7 193.3,23.3 202,19.5 209.3,17.7 211.7,20.7 207,27 201.3,34.7" fill="none" stroke="#000" stroke-width="1"/><path d="M193 24L204 34M194 33L203 22M202 20L208 26M204 20L206 28" stroke="#000" fill="none"/>
<polygon points="209.3,29.3 214.7,22.7 222.7,21.3 232.3,17.3 237.3,21.3 247.3,22.7 253.3,30.7 242.7,38 231,47.3 225.3,41.3 218,35.3" fill="url(#pA)" stroke="#000" stroke-width="1"/>
<path d="M232 17L229 24L231 36L233 40L235 26Z" fill="#000"/><path d="M232 17L232 46M222 22L232 30L247 23M214 28L232 36L252 30" stroke="#000" fill="none"/>
<polygon points="205.2,35.2 211,39 216,51.8 211.4,58 198.5,52.7 201,42" fill="none" stroke="#000" stroke-width="1"/>
<path d="M198.5 52.7H216M205 44V60M205 44L216 52M205 44L199 52" stroke="#000" fill="none"/>
<polygon points="187,44 192,41.5 197.5,43 197.5,56 196,68 193,72 189,64 186,52" fill="url(#pC)" stroke="#000" stroke-width="1"/>
<polygon points="181.5,66 185,62 190,63 194,65 195,78 191.3,88 186,81 181.5,73" fill="url(#pA)" stroke="#000" stroke-width="1"/>
<polygon points="209.3,56 222.7,52.7 239.3,52.7 254.3,57.7 241,72.7 234.3,81 226,72.7 212.7,62.7" fill="url(#pA)" stroke="#000" stroke-width="1"/>
<polygon points="205,73 208,66.5 212,67 214.7,73 215,84 212,90 208,90 205.5,82" fill="url(#pD)" stroke="#000" stroke-width="1"/>
<polygon points="208,92 213,86 218,92 220.7,100 220.7,113 215,119 209.5,115 208,104" fill="url(#pD)" stroke="#000" stroke-width="1"/>
<path d="M209 86L212 92L210 94Z" fill="#000"/>
<polygon points="197.3,98.7 202.7,94.7 208,97.3 208,110 206.7,115.3 204,120 200.7,112.7" fill="url(#pC)" stroke="#000" stroke-width="1"/>
<path d="M201 108L204 120L205 108Z" fill="#000"/>
<polygon points="234.7,102.7 238.7,93.3 242.7,96 249.3,92 254.7,96.7 254,117.3 238,119.3 234.7,114.7" fill="url(#pD)" stroke="#000" stroke-width="1"/>
<path d="M238 93L241 112L238 119Z M252 106L255 118L251 117Z" fill="#000"/>
<polygon points="63,172 72.5,172 76,175 74,183 100,182.5 126,180.5 169.3,181 169.8,252.3 140,253.5 110,252 80,253 59.6,253.7 60,230 62,190" fill="none" stroke="#000" stroke-width="1"/>
<polygon points="81.3,173.1 90.6,173.5 90.6,180 81.3,180.5" fill="none" stroke="#000" stroke-width="1"/>
<path d="M81.3 180L90.6 173.5M63 177H75M63 182L72 172M68 172V183" stroke="#000" fill="none"/>
<path d="M63.5 182V253M71.5 182V253M84.5 182V253M95.5 182V253M106.5 182V253M119.5 182V253M130.5 182V253M140.5 182V253M150.5 182V253M161.5 182V253M169.5 182V253M61 183.5H170M61 190.5H170M61 197.5H170M61 203.5H170M61 209.5H170M61 215.5H170M61 222.5H170M61 229.5H170M61 236.5H170M61 243.5H170M61 250.5H170M63.5 190.5L71.5 183.5M63.5 197.5L71.5 190.5M63.5 203.5L71.5 197.5M63.5 209.5L71.5 203.5M63.5 215.5L71.5 209.5M63.5 222.5L71.5 215.5M63.5 229.5L71.5 222.5M63.5 236.5L71.5 229.5M63.5 243.5L71.5 236.5M63.5 250.5L71.5 243.5M63.5 254.5L71.5 250.5M71.5 190.5L84.5 183.5M71.5 197.5L84.5 190.5M71.5 203.5L84.5 197.5M71.5 209.5L84.5 203.5M71.5 215.5L84.5 209.5M71.5 222.5L84.5 215.5M71.5 229.5L84.5 222.5M71.5 236.5L84.5 229.5M71.5 243.5L84.5 236.5M71.5 250.5L84.5 243.5M71.5 254.5L84.5 250.5M84.5 190.5L95.5 183.5M84.5 197.5L95.5 190.5M84.5 203.5L95.5 197.5M84.5 209.5L95.5 203.5M84.5 215.5L95.5 209.5M84.5 222.5L95.5 215.5M84.5 229.5L95.5 222.5M84.5 236.5L95.5 229.5M84.5 243.5L95.5 236.5M84.5 250.5L95.5 243.5M84.5 254.5L95.5 250.5M95.5 190.5L106.5 183.5M95.5 197.5L106.5 190.5M95.5 203.5L106.5 197.5M95.5 209.5L106.5 203.5M95.5 215.5L106.5 209.5M95.5 222.5L106.5 215.5M95.5 229.5L106.5 222.5M95.5 236.5L106.5 229.5M95.5 243.5L106.5 236.5M95.5 250.5L106.5 243.5M95.5 254.5L106.5 250.5M106.5 190.5L119.5 183.5M106.5 197.5L119.5 190.5M106.5 203.5L119.5 197.5M106.5 209.5L119.5 203.5M106.5 215.5L119.5 209.5M106.5 222.5L119.5 215.5M106.5 229.5L119.5 222.5M106.5 236.5L119.5 229.5M106.5 243.5L119.5 236.5M106.5 250.5L119.5 243.5M106.5 254.5L119.5 250.5M119.5 190.5L130.5 183.5M119.5 197.5L130.5 190.5M119.5 203.5L130.5 197.5M119.5 209.5L130.5 203.5M119.5 215.5L130.5 209.5M119.5 215.5L130.5 222.5M119.5 222.5L130.5 229.5M119.5 229.5L130.5 236.5M119.5 236.5L130.5 243.5M119.5 243.5L130.5 250.5M119.5 250.5L130.5 254.5M130.5 190.5L140.5 183.5M130.5 197.5L140.5 190.5M130.5 203.5L140.5 197.5M130.5 209.5L140.5 203.5M130.5 215.5L140.5 209.5M130.5 215.5L140.5 222.5M130.5 222.5L140.5 229.5M130.5 229.5L140.5 236.5M130.5 236.5L140.5 243.5M130.5 243.5L140.5 250.5M130.5 250.5L140.5 254.5M140.5 190.5L150.5 183.5M140.5 197.5L150.5 190.5M140.5 203.5L150.5 197.5M140.5 209.5L150.5 203.5M140.5 215.5L150.5 209.5M140.5 215.5L150.5 222.5M140.5 222.5L150.5 229.5M140.5 229.5L150.5 236.5M140.5 236.5L150.5 243.5M140.5 243.5L150.5 250.5M140.5 250.5L150.5 254.5M150.5 190.5L161.5 183.5M150.5 197.5L161.5 190.5M150.5 203.5L161.5 197.5M150.5 209.5L161.5 203.5M150.5 215.5L161.5 209.5M150.5 215.5L161.5 222.5M150.5 222.5L161.5 229.5M150.5 229.5L161.5 236.5M150.5 236.5L161.5 243.5M150.5 243.5L161.5 250.5M150.5 250.5L161.5 254.5M161.5 190.5L169.5 183.5M161.5 197.5L169.5 190.5M161.5 203.5L169.5 197.5M161.5 209.5L169.5 203.5M161.5 215.5L169.5 209.5M161.5 215.5L169.5 222.5M161.5 222.5L169.5 229.5M161.5 229.5L169.5 236.5M161.5 236.5L169.5 243.5M161.5 243.5L169.5 250.5M161.5 250.5L169.5 254.5" stroke="#000" fill="none" stroke-width="1" shape-rendering="crispEdges"/>
<path d="M62 188Q90 185 110 186Q140 180 169 186" stroke="#000" stroke-width="2.2" fill="none"/>
<polygon points="226.6,224 229.75,254.4 223.5,254.4" fill="none" stroke="#000" stroke-width="1"/>
<path d="M226.6 224V254" stroke="#000" fill="none" stroke-width="0.8"/>
</svg><div class="t" style="left:23.00px;top:7px;font-size:11.5px;color:#767676;transform:scaleX(0.9990)">3D Object Converter v6.506</div>
<div class="t" style="left:180.80px;top:7px;font-size:11.5px;color:#767676;transform:scaleX(0.9916)">[ G:¥Extracted Files¥character¥model¥1_pc¥2_phw¥armor¥9_upperbody¥phw_10_ub_0001.pac ]</div>
<div class="t" style="left:7.40px;top:27px;font-size:12px;color:#1a1a1a;transform:scaleX(0.8951)">File</div>
<div class="t" style="left:39.80px;top:27px;font-size:12px;color:#1a1a1a;transform:scaleX(0.8999)">Draw</div>
<div class="t" style="left:80.50px;top:27px;font-size:12px;color:#1a1a1a;transform:scaleX(0.9224)">View</div>
<div class="t" style="left:119.00px;top:27px;font-size:12px;color:#1a1a1a;transform:scaleX(0.9549)">Tools</div>
<div class="t" style="left:160.00px;top:27px;font-size:12px;color:#1a1a1a;transform:scaleX(0.9798)">Help</div>
<div class="t" style="left:1743.90px;top:89px;font-size:12px;color:#000;transform:scaleX(0.8958)">3D Scene</div>
<div class="t" style="left:1743.40px;top:105px;font-size:12px;color:#000;transform:scaleX(0.8546)">Materials</div>
<div class="t" style="left:1743.50px;top:121px;font-size:12px;color:#000;transform:scaleX(0.8758)">Bones</div>
<div class="t" style="left:2.60px;top:1066px;font-size:12px;color:#000;transform:scaleX(0.9023)">Ready</div>
<div class="t" style="left:420.00px;top:1066px;font-size:12px;color:#000;transform:scaleX(0.9420)">Objects: 1   Vertices: 2143   Polygons: 2545   Materials: 1   Bones: 1</div>
<div class="t" style="left:1144.40px;top:143px;font-size:12px;color:#000;transform:scaleX(0.9613)">Unwrap parameters</div>
<div class="t" style="left:1509.70px;top:175px;font-size:12px;color:#000;transform:scaleX(0.8666)">Preview (256x256):</div>
<div class="t" style="left:1170.50px;top:197px;font-size:12px;color:#fff;transform:scaleX(0.6719)">1.</div>
<div class="t" style="left:1188.00px;top:197px;font-size:12px;color:#fff;transform:scaleX(0.8798)">M0025_ImpBoss_UA_0002</div>
<div class="t" style="left:1455.00px;top:469px;font-size:11.5px;color:#000;transform:scaleX(0.9085)">Keep proportions</div>
<div class="t" style="left:1199.50px;top:497px;font-size:11.5px;color:#000;transform:scaleX(0.9336)">Save the selected object's UV map</div>
<div class="t" style="left:1437.50px;top:497px;font-size:12px;color:#000;transform:scaleX(0.8656)">Output resolution:</div>
<div class="t" style="left:1536.80px;top:494px;font-size:12px;color:#000;transform:scaleX(0.8600)">512</div>
<div class="t" style="left:1597.30px;top:495px;font-size:12px;color:#000;transform:scaleX(0.8667)">x</div>
<div class="t" style="left:1616.80px;top:494px;font-size:12px;color:#000;transform:scaleX(0.8650)">512</div>
<div class="t" style="left:1278.30px;top:544px;font-size:12px;color:#000;transform:scaleX(0.8480)">OK</div>
<div class="t" style="left:1543.75px;top:544px;font-size:12px;color:#000;transform:scaleX(0.8790)">Cancel</div>
</body></html>
